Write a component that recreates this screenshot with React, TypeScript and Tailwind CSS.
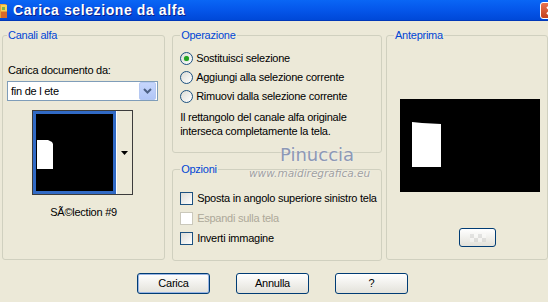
import React from 'react';

const font = "font-['Liberation_Sans',Arial,sans-serif]";

const Radio: React.FC<{ checked?: boolean; label: string }> = ({ checked, label }) => (
  <div className="flex h-[19px] items-center">
    <span className="flex h-[13px] w-[13px] items-center justify-center rounded-full border border-[#1C5180] bg-gradient-to-br from-[#DCDCD5] to-white">
      {checked && <span className="h-[5px] w-[5px] rounded-full bg-[#21A121] shadow-[0_0_1px_#5ED05E]" />}
    </span>
    <span className="ml-[3px] whitespace-nowrap">{label}</span>
  </div>
);

const Check: React.FC<{ disabled?: boolean; label: string }> = ({ disabled, label }) => (
  <div className="flex h-[20px] items-center">
    <span
      className={
        disabled
          ? 'h-[13px] w-[13px] shrink-0 border border-[#CAC8BB] bg-white'
          : 'h-[13px] w-[13px] shrink-0 border border-[#1C5180] bg-gradient-to-br from-[#DCDCD7] to-white'
      }
    />
    <span className={disabled ? 'ml-[4px] whitespace-nowrap text-[#ACA899]' : 'ml-[4px] whitespace-nowrap'}>{label}</span>
  </div>
);

const Button: React.FC<{ label: string; isDefault?: boolean }> = ({ label, isDefault }) => (
  <button
    className={
      'flex h-[21px] w-[73px] items-center justify-center rounded-[3px] border border-[#003C74] bg-gradient-to-b from-white to-[#E3E2DA] text-black ' +
      (isDefault ? 'shadow-[inset_0_0_0_1px_#99B5E4]' : '')
    }
  >
    {label}
  </button>
);

const App: React.FC = () => {
  return (
    <div className={`relative h-[302px] w-[548px] overflow-hidden bg-[#ECE9D8] text-[11px] leading-[13px] tracking-[-0.25px] text-black ${font}`}>
      {/* title bar */}
      <div className="flex h-[21px] items-center overflow-hidden border-b border-[#0038B8] bg-gradient-to-b from-[#0A66F5] via-[#0556EA] to-[#0048D8]">
        <svg width="16" height="16" viewBox="0 0 16 16" className="-ml-[8px] mt-[1px] shrink-0">
          <rect x="1" y="1" width="14" height="14" rx="2" fill="#E8A33A" />
          <rect x="9" y="2" width="6" height="6" fill="#F5D25A" />
          <rect x="9" y="9" width="6" height="6" fill="#D9692A" />
          <rect x="10" y="4" width="3" height="3" fill="#7FB24A" />
        </svg>
        <span className="ml-[5px] whitespace-nowrap text-[14px] font-bold tracking-[0.6px] text-white [text-shadow:1px_1px_0_#0A1F8A]">
          Carica selezione da alfa
        </span>
        <div className="-mr-[13px] ml-auto flex h-[17px] w-[21px] shrink-0 items-center justify-center rounded-[3px] border border-white bg-gradient-to-b from-[#E8734F] to-[#C2401C]">
          <svg width="9" height="9" viewBox="0 0 9 9">
            <path d="M1 1 L8 8 M8 1 L1 8" stroke="white" strokeWidth="2" />
          </svg>
        </div>
      </div>

      {/* groups */}
      <div className="flex pl-[2px] pt-[8px]">
        <fieldset className="h-[231px] w-[164px] rounded-[3px] border border-[#D0D0BF] px-[4px]">
          <legend className="px-[1px] text-[#0046D5]">Canali alfa</legend>
          <div className="mt-[22px] pl-[1px]">Carica documento da:</div>
          <div className="mt-[4px] flex h-[20px] w-[151px] items-center border border-[#7F9DB9] bg-white pl-[3px]">
            <span className="flex-1">fin de l ete</span>
            <span className="mr-[1px] flex h-[18px] w-[17px] items-center justify-center rounded-[2px] border border-[#B5C8F2] bg-gradient-to-b from-[#C6D6FC] to-[#B1C6F7]">
              <svg width="9" height="6" viewBox="0 0 9 6">
                <path d="M1 1 L4.5 4.5 L8 1" fill="none" stroke="#4D6185" strokeWidth="2" />
              </svg>
            </span>
          </div>
          <div className="ml-[25px] mt-[9px] flex h-[85px] w-[101px] border border-[#3C3C3C] bg-white">
            <div className="h-[83px] w-[83px] border-[3px] border-[#316AC5] bg-black">
              <svg width="77" height="77" viewBox="0 0 77 77" className="block">
                <polygon points="1,26 12,26 16,28 17,30 17,55 1,55" fill="white" />
              </svg>
            </div>
            <div className="flex w-[16px] items-center justify-center border-l border-white bg-[#ECE9D8]">
              <svg width="7" height="4" viewBox="0 0 7 4">
                <polygon points="0,0 7,0 3.5,4" fill="black" />
              </svg>
            </div>
          </div>
          <div className="mt-[11px] text-center">SÃ©lection #9</div>
        </fieldset>

        <div className="ml-[7px] flex w-[211px] flex-col">
          <fieldset className="h-[124px] rounded-[3px] border border-[#D0D0BF] pl-[7px]">
            <legend className="px-[1px] text-[#0046D5]">Operazione</legend>
            <div className="mt-[7px]">
              <Radio checked label="Sostituisci selezione" />
              <Radio label="Aggiungi alla selezione corrente" />
              <Radio label="Rimuovi dalla selezione corrente" />
            </div>
            <div className="mt-[4px] leading-[14px]">
              Il rettangolo del canale alfa originale
              <br />
              interseca completamente la tela.
            </div>
          </fieldset>
          <fieldset className="mt-[10px] h-[98px] rounded-[3px] border border-[#D0D0BF] pl-[7px]">
            <legend className="px-[1px] text-[#0046D5]">Opzioni</legend>
            <div className="mt-[12px]">
              <Check label="Sposta in angolo superiore sinistro tela" />
              <Check disabled label="Espandi sulla tela" />
              <Check label="Inverti immagine" />
            </div>
          </fieldset>
        </div>

        <fieldset className="ml-[4px] h-[231px] w-[162px] shrink-0 rounded-[3px] border border-[#D0D0BF]">
          <legend className="ml-[7px] px-[1px] text-[#0046D5]">Anteprima</legend>
          <div className="ml-[13px] mt-[57px] h-[93px] w-[140px] bg-black">
            <svg width="140" height="93" viewBox="0 0 140 93" className="block">
              <polygon points="12,23 22,24 41,25 41,68 12,68" fill="white" />
            </svg>
          </div>
          <div className="ml-[72px] mt-[36px] flex h-[19px] w-[37px] items-center justify-center rounded-[3px] border border-[#003C74] bg-gradient-to-b from-white to-[#E3E2DA]">
            <div className="grid grid-cols-4 opacity-40">
              {Array.from({ length: 8 }).map((_, i) => (
                <span
                  key={i}
                  className={
                    (Math.floor(i / 4) + i) % 2 === 0 ? 'h-[4px] w-[4px] bg-[#C8C8C8]' : 'h-[4px] w-[4px] bg-white'
                  }
                />
              ))}
            </div>
          </div>
        </fieldset>
      </div>

      {/* buttons */}
      <div className="mt-[12px] flex gap-[26px] pl-[137px]">
        <Button label="Carica" isDefault />
        <Button label="Annulla" />
        <Button label="?" />
      </div>

      {/* watermark */}
      <div className="pointer-events-none absolute left-[280px] top-[145px] font-['DejaVu_Sans',sans-serif] text-[18px] leading-[20px] tracking-normal text-[#8D98B5] [text-shadow:0_0_2px_#F4F4F4]">
        Pinuccia
      </div>
      <div className="pointer-events-none absolute left-[249px] top-[167px] font-['DejaVu_Sans',sans-serif] text-[10.5px] italic leading-[13px] tracking-normal text-[#A0A0A0] [text-shadow:0_0_2px_#FFFFFF]">
        www.maidiregrafica.eu
      </div>
    </div>
  );
};

export default App;
